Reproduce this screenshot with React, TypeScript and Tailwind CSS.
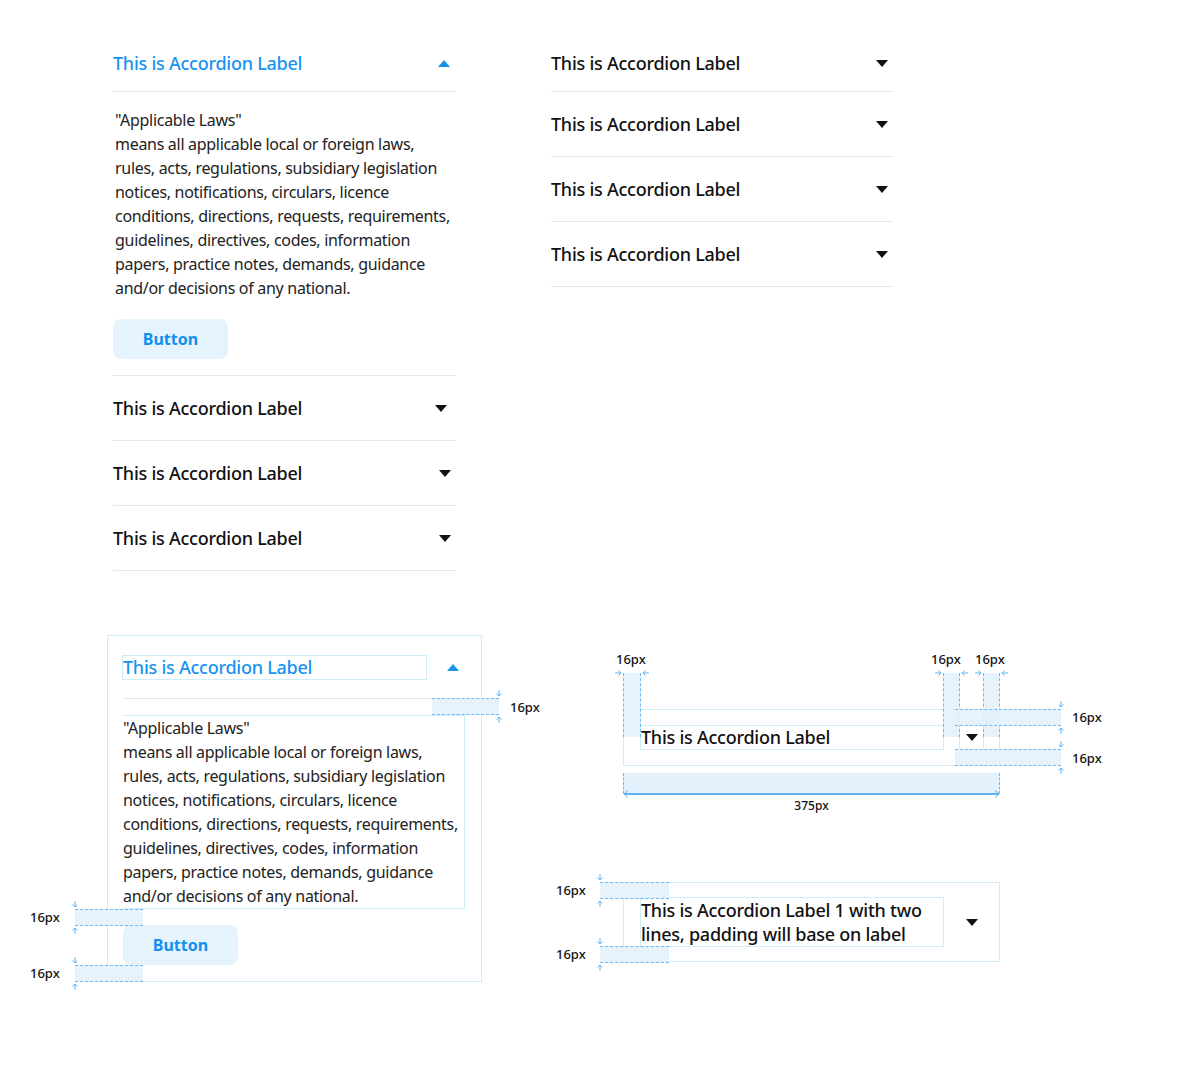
import React from "react";

const LAWS = [
  '"Applicable Laws"',
  "means all applicable local or foreign laws,",
  "rules, acts, regulations, subsidiary legislation",
  "notices, notifications, circulars, licence",
  "conditions, directions, requests, requirements,",
  "guidelines, directives, codes, information",
  "papers, practice notes, demands, guidance",
  "and/or decisions of any national.",
];

function Caret({ up = false, blue = false }: { up?: boolean; blue?: boolean }) {
  return (
    <svg width="12" height="7" viewBox="0 0 12 7" className="block">
      {up ? (
        <polygon points="0,7 12,7 6,0" fill={blue ? "#1793ef" : "#111"} />
      ) : (
        <polygon points="0,0 12,0 6,7" fill={blue ? "#1793ef" : "#111"} />
      )}
    </svg>
  );
}

// small blue arrows used by the redline annotations
function Arrow({ dir }: { dir: "down" | "up" | "left" | "right" }) {
  const paths = {
    down: "M4 0V6M1.5 3.5L4 6L6.5 3.5",
    up: "M4 8V2M1.5 4.5L4 2L6.5 4.5",
    right: "M0 4H6M3.5 1.5L6 4L3.5 6.5",
    left: "M8 4H2M4.5 1.5L2 4L4.5 6.5",
  };
  return (
    <svg width="8" height="8" viewBox="0 0 8 8" className="block">
      <path d={paths[dir]} stroke="#5eb3f3" strokeWidth="1" fill="none" />
    </svg>
  );
}

// shaded strip measuring a height (dashed top and bottom)
function HeightStrip({ className, end }: { className: string; end: "left" | "right" }) {
  return (
    <div className={`absolute border-y border-dashed border-[#6cb9f3] bg-[#e3f1fc]/90 ${className}`}>
      <div className={`absolute -top-[9px] ${end === "right" ? "-right-[4px]" : "-left-[4px]"}`}>
        <Arrow dir="down" />
      </div>
      <div className={`absolute -bottom-[9px] ${end === "right" ? "-right-[4px]" : "-left-[4px]"}`}>
        <Arrow dir="up" />
      </div>
    </div>
  );
}

// shaded strip measuring a width (dashed left and right)
function WidthStrip({ className }: { className: string }) {
  return (
    <div className={`absolute border-x border-dashed border-[#6cb9f3] bg-[#e3f1fc]/90 ${className}`}>
      <div className="absolute -top-[4px] -left-[9px]">
        <Arrow dir="right" />
      </div>
      <div className="absolute -top-[4px] -right-[9px]">
        <Arrow dir="left" />
      </div>
    </div>
  );
}

function Tag({ className, children }: { className: string; children: React.ReactNode }) {
  return (
    <span className={`absolute text-[13px] leading-4 font-medium tracking-normal text-[#111] whitespace-nowrap ${className}`}>
      {children}
    </span>
  );
}

function Laws() {
  return (
    <div className="text-base leading-6 tracking-[-0.3px] text-[#222]">
      {LAWS.map((l) => (
        <div key={l} className="whitespace-nowrap">
          {l}
        </div>
      ))}
    </div>
  );
}

function Row({ first = false, pad = "pr-1" }: { first?: boolean; pad?: string }) {
  return (
    <div
      className={`flex items-center justify-between border-b border-[#e7e7e7] ${first ? "py-4" : "py-5"}`}
    >
      <span className="text-[18px] leading-6 font-medium tracking-[-0.25px] text-[#111]">This is Accordion Label</span>
      <span className={`flex h-6 w-6 items-center justify-center ${pad}`}>
        <Caret />
      </span>
    </div>
  );
}

export default function App() {
  return (
    <div className="min-h-[1080px] w-[1178px] bg-white font-['Noto_Sans',sans-serif] text-[#111]">
      {/* live accordions */}
      <div className="flex gap-[95px] pl-[113px] pt-[35px]">
        <div className="w-[343px]">
          <div className="flex items-center justify-between border-b border-[#e7e7e7] py-4">
            <span className="text-[18px] leading-6 font-medium tracking-[-0.25px] text-[#1793ef]">This is Accordion Label</span>
            <span className="flex h-6 w-6 items-center justify-center">
              <Caret up blue />
            </span>
          </div>
          <div className="border-b border-[#e7e7e7] py-4 pl-[2px]">
            <Laws />
            <button className="mt-[19px] -ml-[2px] h-10 w-[115px] rounded-lg bg-[#e5f3fd] text-base font-bold text-[#1190ee]">
              Button
            </button>
          </div>
          <Row pad="pr-[6px]" />
          <Row pad="pl-[2px]" />
          <Row pad="pl-[2px]" />
        </div>

        <div className="w-[342px]">
          <Row first pad="pl-[2px]" />
          <Row pad="pl-[2px]" />
          <Row pad="pl-[2px]" />
          <Row pad="pl-[2px]" />
        </div>
      </div>

      {/* redline specs */}
      <div className="mt-[64px] flex gap-[141px] pl-[107px]">
        <div className="relative w-[375px] border border-[#cdeef6] pl-[15px] pr-4 pb-4">
          <div className="flex items-center justify-between border-b border-[#e4e4e4] pt-[19px] pb-[18px]">
            <div className="-ml-px h-[25px] w-[305px] border border-[#cdeef6] text-[18px] leading-[23px] font-medium tracking-[-0.25px] text-[#1793ef]">
              This is Accordion Label
            </div>
            <span className="flex h-6 w-6 items-center justify-center">
              <Caret up blue />
            </span>
          </div>
          <div className="mt-4 border border-l-0 border-[#cdeef6]">
            <Laws />
          </div>
          <button className="mt-4 h-10 w-[115px] rounded-lg bg-[#e5f3fd] text-base font-bold text-[#1190ee]">
            Button
          </button>

          <HeightStrip end="right" className="left-[324px] top-[62px] h-[17px] w-[67px]" />
          <Tag className="left-[402px] top-[63px]">16px</Tag>
          <HeightStrip end="left" className="-left-[33px] top-[273px] h-[17px] w-[68px]" />
          <Tag className="-left-[78px] top-[273px]">16px</Tag>
          <HeightStrip end="left" className="-left-[33px] top-[329px] h-[17px] w-[68px]" />
          <Tag className="-left-[78px] top-[329px]">16px</Tag>
        </div>

        <div className="flex flex-col pt-[74px]">
          <div className="relative flex w-[377px] items-center border border-[#cdeef6] py-[15px] pl-4 pr-[15px]">
            <div className="h-[25px] w-[304px] border border-[#cdeef6] text-[18px] leading-[23px] font-medium tracking-[-0.25px]">
              This is Accordion Label
            </div>
            <div className="ml-[15px] flex h-[24px] w-[25px] items-center justify-center border-x border-[#cdeef6]">
              <Caret />
            </div>

            <WidthStrip className="-left-px -top-[37px] h-[64px] w-[18px]" />
            <WidthStrip className="left-[319px] -top-[37px] h-[64px] w-[17px]" />
            <WidthStrip className="left-[359px] -top-[37px] h-[64px] w-[17px]" />
            <Tag className="-left-[8px] -top-[59px]">16px</Tag>
            <Tag className="left-[307px] -top-[59px]">16px</Tag>
            <Tag className="left-[351px] -top-[59px]">16px</Tag>
            <HeightStrip end="right" className="left-[331px] -top-px h-[17px] w-[106px]" />
            <HeightStrip end="right" className="left-[331px] top-[39px] h-[17px] w-[106px]" />
            <Tag className="left-[448px] -top-[1px]">16px</Tag>
            <Tag className="left-[448px] top-[40px]">16px</Tag>
          </div>

          <div className="relative mt-[7px] h-[21px] w-[377px] border-x border-dashed border-[#6cb9f3] bg-[#e3f1fc]">
            <div className="absolute -bottom-px left-0 right-0 h-[2px] bg-[#5eb3f3]" />
            <svg width="6" height="8" viewBox="0 0 6 8" className="absolute -bottom-[4px] -left-px">
              <path d="M5 0.5L1 4L5 7.5" stroke="#5eb3f3" fill="none" />
            </svg>
            <svg width="6" height="8" viewBox="0 0 6 8" className="absolute -bottom-[4px] -right-px">
              <path d="M1 0.5L5 4L1 7.5" stroke="#5eb3f3" fill="none" />
            </svg>
          </div>
          <div className="mt-[4px] w-[377px] text-center text-xs leading-4 font-medium">375px</div>

          <div className="relative mt-[68px] flex w-[377px] items-center border border-[#cdeef6] py-[14px] pl-4 pr-[15px]">
            <div className="w-[304px] border border-[#cdeef6] text-[18px] leading-6 font-medium tracking-[-0.25px]">
              This is Accordion Label 1 with two lines, padding will base on label
            </div>
            <div className="ml-[15px] flex h-6 w-[25px] items-center justify-center">
              <Caret />
            </div>

            <HeightStrip end="left" className="-left-[24px] -top-px h-[17px] w-[69px]" />
            <HeightStrip end="left" className="-left-[24px] top-[63px] h-[17px] w-[69px]" />
            <Tag className="-left-[68px] -top-[1px]">16px</Tag>
            <Tag className="-left-[68px] top-[63px]">16px</Tag>
          </div>
        </div>
      </div>
    </div>
  );
}
